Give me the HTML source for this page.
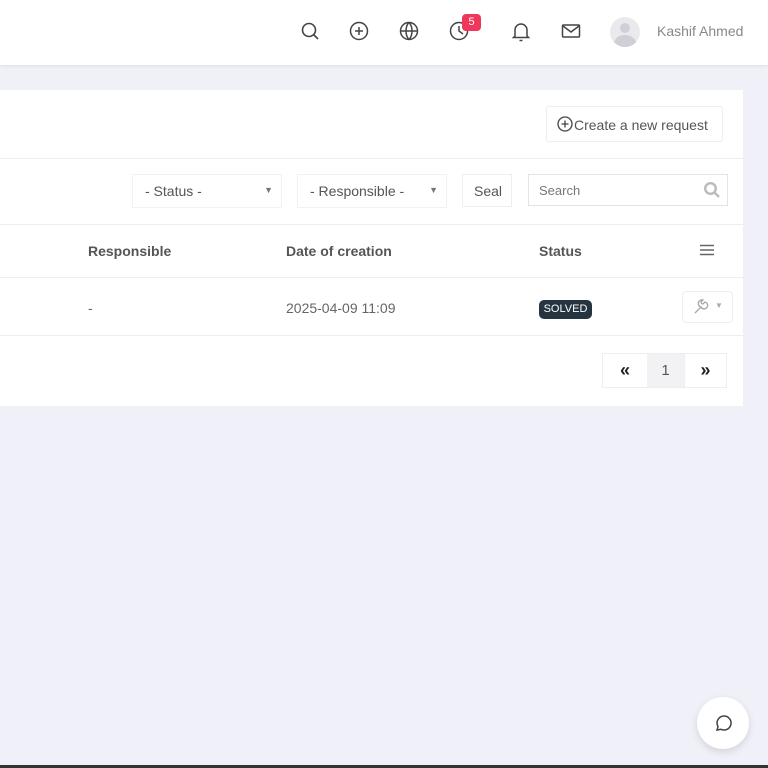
<!DOCTYPE html><html><head><style>
*{box-sizing:border-box;margin:0;padding:0}
body{width:768px;height:768px;overflow:hidden;background:#f0f0f8;font-family:"Liberation Sans",sans-serif;position:relative;color:#555}
.hdr{position:absolute;left:0;top:0;width:768px;height:65px;background:#fff;box-shadow:0 1px 4px rgba(0,0,0,.08)}
.ic{position:absolute;top:21px}
.card{position:absolute;left:0;top:90px;width:743px;height:316px;background:#fff}
.line{position:absolute;left:0;height:1px;background:#eceef2;width:743px}
.sel{position:absolute;top:174px;height:34px;border:1px solid #f2f2f2;font-size:14px;color:#555;padding:8px 12px}
.th{position:absolute;top:243px;font-size:14px;font-weight:bold;color:#555}
.td{position:absolute;top:300px;font-size:14px;color:#666}
</style></head><body>
<div class="hdr">
<svg class="ic" style="left:300px" width="20" height="20" viewBox="0 0 20 20" fill="none" stroke="#444" stroke-width="1.6"><circle cx="9" cy="9" r="6.5"/><path d="M14 14l4 4"/></svg>
<svg class="ic" style="left:349px" width="20" height="20" viewBox="0 0 20 20" fill="none" stroke="#444" stroke-width="1.5"><circle cx="10" cy="10" r="8.5"/><path d="M10 6v8M6 10h8"/></svg>
<svg class="ic" style="left:399px" width="20" height="20" viewBox="0 0 20 20" fill="none" stroke="#444" stroke-width="1.5"><circle cx="10" cy="10" r="8.5"/><path d="M1.5 10h17M10 1.5c-4 4-4 13 0 17M10 1.5c4 4 4 13 0 17"/></svg>
<svg class="ic" style="left:449px" width="20" height="20" viewBox="0 0 20 20" fill="none" stroke="#444" stroke-width="1.5"><circle cx="10" cy="10" r="8.5"/><path d="M10 5v5l4 3"/></svg>
<div style="position:absolute;left:462px;top:14px;width:19px;height:17px;background:#f0365a;border-radius:4px;color:#fff;font-size:11px;text-align:center;line-height:17px">5</div>
<svg class="ic" style="left:511px" width="20" height="22" viewBox="0 0 20 22" fill="none" stroke="#444" stroke-width="1.5"><path d="M4 15V9a6 6 0 0112 0v6l1.5 1.5h-15z"/><path d="M8.5 19.5h3"/></svg>
<svg class="ic" style="left:561px" width="20" height="20" viewBox="0 0 20 20" fill="none" stroke="#444" stroke-width="1.5"><rect x="1.5" y="4" width="17" height="12" rx="1"/><path d="M2 5l8 6 8-6"/></svg>
<div style="position:absolute;left:610px;top:17px;width:30px;height:30px;border-radius:50%;background:#e9e9ee;overflow:hidden"><div style="position:absolute;left:10px;top:6px;width:10px;height:10px;border-radius:50%;background:#cfcfd6"></div><div style="position:absolute;left:4px;top:18px;width:22px;height:16px;border-radius:50%;background:#cfcfd6"></div></div>
<div style="position:absolute;left:657px;top:23px;font-size:14px;color:#888">Kashif Ahmed</div>
</div>
<div class="card"></div>
<div style="position:absolute;left:546px;top:106px;width:177px;height:36px;border:1px solid #eee;border-radius:3px;font-size:14px;color:#555;padding:10px 0 0 10px">
<svg style="position:absolute;left:10px;top:9px" width="16" height="16" viewBox="0 0 16 16" fill="none" stroke="#444" stroke-width="1.3"><circle cx="8" cy="8" r="7"/><path d="M8 4.5v7M4.5 8h7"/></svg><span style="margin-left:17px">Create a new request</span></div>
<div class="line" style="top:158px"></div>
<div class="sel" style="left:132px;width:150px">- Status -<span style="position:absolute;right:8px;top:10px;font-size:9px;color:#777">▼</span></div>
<div class="sel" style="left:297px;width:150px">- Responsible -<span style="position:absolute;right:8px;top:10px;font-size:9px;color:#777">▼</span></div>
<div class="sel" style="left:462px;width:50px;height:33px;border-color:#eee;padding:8px 11px">Seal</div>
<div class="sel" style="left:528px;width:200px;height:32px;border-color:#e3e3e3;font-size:13px;color:#777;padding:8px 10px">Search
<svg style="position:absolute;right:6px;top:6px" width="18" height="18" viewBox="0 0 18 18" fill="none" stroke="#bbb" stroke-width="2.4"><circle cx="7.5" cy="7.5" r="5.3"/><path d="M11.5 11.5l4.5 4.5"/></svg></div>
<div class="line" style="top:224px"></div>
<div class="th" style="left:88px">Responsible</div>
<div class="th" style="left:286px">Date of creation</div>
<div class="th" style="left:539px">Status</div>
<svg style="position:absolute;left:700px;top:244px" width="14" height="12" viewBox="0 0 14 12" stroke="#666" stroke-width="1.6"><path d="M0 1.5h14M0 6h14M0 10.5h14"/></svg>
<div class="line" style="top:277px"></div>
<div class="td" style="left:88px">-</div>
<div class="td" style="left:286px">2025-04-09 11:09</div>
<div style="position:absolute;left:539px;top:300px;width:53px;height:19px;background:#263340;border-radius:5px;color:#fff;font-size:11px;text-align:center;line-height:19px">SOLVED</div>
<div style="position:absolute;left:682px;top:291px;width:51px;height:32px;border:1px solid #eee;border-radius:4px">
<svg style="position:absolute;left:10px;top:7px" width="16" height="16" viewBox="0 0 16 16" fill="none" stroke="#aaa" stroke-width="1.4"><path d="M2 14l6-6M8 8a3.5 3.5 0 104-5l-2 2-1.5-.5L8 3l2-2A3.5 3.5 0 008 8z"/></svg>
<span style="position:absolute;left:32px;top:9px;font-size:8px;color:#aaa">▼</span></div>
<div class="line" style="top:335px"></div>
<div style="position:absolute;left:602px;top:353px;width:125px;height:35px;border:1px solid #eee;display:flex">
<div style="width:44px;text-align:center;line-height:33px;font-size:18px;color:#222;font-weight:bold">«</div>
<div style="width:37px;background:#f2f2f4;text-align:center;line-height:33px;font-size:15px;color:#555">1</div>
<div style="flex:1;text-align:center;line-height:33px;font-size:18px;color:#222;font-weight:bold;border-left:1px solid #eee">»</div></div>
<div style="position:absolute;left:697px;top:697px;width:52px;height:52px;border-radius:50%;background:#fff;box-shadow:0 3px 8px rgba(0,0,0,.12)">
<svg style="position:absolute;left:17px;top:17px" width="18" height="18" viewBox="0 0 18 18" fill="none" stroke="#444" stroke-width="1.5"><path d="M3 16l1-3.5A7 7 0 1 1 7 15.3z"/></svg></div>
<div style="position:absolute;left:0;top:765px;width:768px;height:3px;background:#333"></div>
</body></html>
